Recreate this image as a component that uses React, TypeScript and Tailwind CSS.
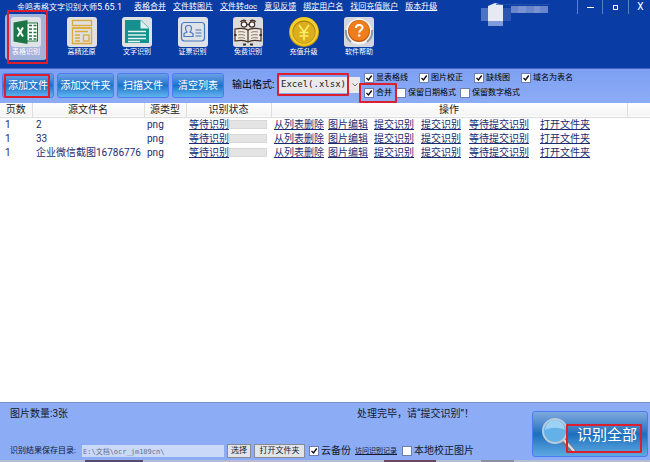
import React from 'react';

const menuLinks = ['表格合并', '文件转图片', '文件转doc', '意见反馈', '绑定用户名', '找回充值账户', '版本升级'];

const files = [
  { pages: 1, name: '2', type: 'png' },
  { pages: 1, name: '33', type: 'png' },
  { pages: 1, name: '企业微信截图16786776', type: 'png' },
];

const rowActions = ['从列表删除', '图片编辑', '提交识别', '提交识别', '等待提交识别', '打开文件夹'];

const ExcelIcon = () => (
  <svg viewBox="0 0 30 30" className="h-[30px] w-[30px]">
    <rect width="30" height="30" rx="3" fill="#dfe3e6" />
    <rect x="15" y="6" width="11.500" height="18" fill="#fff" stroke="#1d7545" />
    <path d="M18 8.500h3M22.500 8.500h3M18 12h3M22.500 12h3M18 15.500h3M22.500 15.500h3M18 19h3M22.500 19h3M18 22h3M22.500 22h3" stroke="#1d7545" strokeWidth="1.700" />
    <path d="M2.500 5.500 16.500 3v24L2.500 24.500z" fill="#1d7545" />
    <path d="M6.500 10.500l5.500 9M12 10.500l-5.500 9" stroke="#fff" strokeWidth="2" />
  </svg>
);

const LayoutIcon = () => (
  <svg viewBox="0 0 30 30" className="h-[30px] w-[30px]" fill="none" stroke="#dcaa3c" strokeWidth="1.300">
    <rect width="30" height="30" rx="3" fill="#dfe0df" stroke="none" />
    <rect x="5.500" y="3.500" width="19" height="5" />
    <path d="M24.500 11v15.500h-19V11z" />
    <path d="M5.500 11h19M8 14.500h13M8 18h5M8 21h5M8 24h5" />
    <rect x="16.500" y="18" width="5.500" height="6" />
  </svg>
);

const TextIcon = () => (
  <svg viewBox="0 0 30 30" className="h-[30px] w-[30px]">
    <rect width="30" height="30" rx="3" fill="#dfe3e3" />
    <path d="M3 3h16l8 8v15H3z" fill="#14908f" />
    <path d="M18.500 3v8.500H27z" fill="#dff1f0" />
    <path d="M6 14.500h18M6 18h18M6 21.500h18M6 24.500h12" stroke="#e6f5f4" strokeWidth="1.300" />
  </svg>
);

const CardIcon = () => (
  <svg viewBox="0 0 30 30" className="h-[30px] w-[30px]" fill="none" stroke="#4878c0" strokeWidth="1.200">
    <rect width="30" height="30" rx="3" fill="#dfe2e6" stroke="none" />
    <rect x="3.500" y="5.500" width="23" height="18.500" rx="3" />
    <path d="M8 13.500C6.500 9 8.500 8.500 10.500 8.500s4 .5 2.500 5l-1 1.500 3 1.500v3H6v-3l3-1.500z" />
    <path d="M17.500 13h6M17.500 16h6M17.500 19h6" />
  </svg>
);

const BookIcon = () => (
  <svg viewBox="0 0 30 30" className="h-[30px] w-[30px]" fill="none" stroke="#443028" strokeWidth="1.200">
    <rect width="30" height="30" rx="3" fill="#dcdcdc" stroke="none" />
    <circle cx="11" cy="7.500" r="2.700" fill="#fff" />
    <circle cx="19" cy="7.500" r="2.700" fill="#fff" />
    <path d="M7.500 5c1-2 3.500-2 5.500-1M17 4c2-1 4.500-1 5.500 1M13.700 7.500h2.600" strokeWidth="1.500" />
    <path d="M2 12c5-1 10-1 13 1 3-2 8-2 13-1v12c-5-1-10-1-13 1-3-2-8-2-13-1z" fill="#f0e9df" />
    <path d="M15 13v12" />
    <path d="M5 15c3-.5 5-.5 7 .5M5 18c3-.5 5-.5 7 .5M5 21c3-.5 5-.5 7 .5M25 15c-3-.5-5-.5-7 .5M25 18c-3-.5-5-.5-7 .5M25 21c-3-.5-5-.5-7 .5" strokeWidth=".6" />
    <path d="M1 18h2.500M26.500 18h2.500M10 27.500h3M17 27.500h3" strokeWidth="2" />
  </svg>
);

const CoinIcon = () => (
  <svg viewBox="0 0 30 30" className="h-[30px] w-[30px]">
    <circle cx="15" cy="15" r="15" fill="#c79a10" />
    <circle cx="15" cy="14.500" r="14.200" fill="#f3cf2c" />
    <circle cx="15" cy="15" r="11.500" fill="#ac7d0d" />
    <circle cx="15" cy="15.500" r="10.800" fill="#dcae1d" />
    <path d="M10 8l5 7 5-7M15 15v8.500M10.500 15.500h9M10.500 19h9" stroke="#fff06a" strokeWidth="1.600" fill="none" />
  </svg>
);

const HelpIcon = () => (
  <svg viewBox="0 0 30 30" className="h-[30px] w-[30px]">
    <rect width="30" height="30" rx="3" fill="#d3d6da" />
    <circle cx="15" cy="14.500" r="13" fill="#f4f4f4" />
    <path d="M2 13a13 13 0 0 0 5 12M28 13a13 13 0 0 1-5 12" stroke="#8d949c" strokeWidth="2" fill="none" />
    <circle cx="15" cy="14" r="11" fill="#bd5510" />
    <circle cx="15" cy="13.500" r="10.300" fill="#ef7d1c" />
    <path d="M12 11c0-4 6.500-4 6.500-.5 0 2.500-3.300 2.500-3.300 5.300" stroke="#fff" strokeWidth="2" fill="none" />
    <circle cx="15.200" cy="18.500" r="1.300" fill="#fff" />
  </svg>
);

const MagnifierIcon = () => (
  <svg viewBox="0 0 36 36" className="h-9 w-9 shrink-0">
    <path d="M22 22l11 12" stroke="#6e7880" strokeWidth="5" />
    <path d="M22 21l11 12" stroke="#d8dcdf" strokeWidth="2.500" />
    <circle cx="14" cy="13" r="12" fill="#62b1e8" stroke="#b9cbd8" strokeWidth="2" />
    <path d="M4 12a10 10 0 0 1 20 0c-7-3-13-3-20 0z" fill="#9bd2f5" />
  </svg>
);

const tools = [
  { label: '表格识别', icon: ExcelIcon },
  { label: '高精还原', icon: LayoutIcon },
  { label: '文字识别', icon: TextIcon },
  { label: '证票识别', icon: CardIcon },
  { label: '免费识别', icon: BookIcon },
  { label: '充值升级', icon: CoinIcon },
  { label: '软件帮助', icon: HelpIcon },
];

const Highlight: React.FC<{ className: string }> = ({ className }) => (
  <span className={`pointer-events-none absolute z-10 rounded-[1px] border-2 border-[#dc1f2e] ${className}`} />
);

const CheckOption: React.FC<{ label: string; checked?: boolean; className?: string }> = ({ label, checked, className = 'text-[8px]' }) => (
  <label className={`relative flex items-center gap-[3px] whitespace-nowrap leading-[10px] ${className}`}>
    <input type="checkbox" defaultChecked={checked} className="peer h-2 w-2 shrink-0 appearance-none bg-white outline outline-[#6c7fae]" />
    <svg viewBox="0 0 8 8" className="pointer-events-none invisible absolute left-0 h-2 w-2 peer-checked:visible">
      <path d="M1.500 4l2 2 3.200-4.500" fill="none" stroke="#111" strokeWidth="1.400" />
    </svg>
    {label}
  </label>
);

const ToolbarButton: React.FC<{ label: string; className?: string; children?: React.ReactNode }> = ({ label, className = 'w-[52px]', children }) => (
  <button className={`relative h-[25px] rounded-[3px] border border-[#4a7bf0] bg-linear-to-b from-[#6aa0e4] via-[#1774cb] to-[#62b4ef] text-[10px] leading-3 whitespace-nowrap text-white ${className}`}>
    {label}
    {children}
  </button>
);

const Header = () => (
  <header className="h-[69px] border-b border-[#3f66c4] bg-[#0a3ca6] text-white">
    <div className="flex h-[14px] items-center pl-[17px]">
      <h1 className="w-[117px] text-[9px] leading-[14px] whitespace-nowrap">
        <span className="text-[8px]">金鸣表格文字识别大师</span>5.65.1
      </h1>
      <nav className="flex gap-[7px] text-[8px] leading-[14px] whitespace-nowrap">
        {menuLinks.map((link) => (
          <a key={link} href="#" className="underline">{link}</a>
        ))}
      </nav>
      <div className="ml-auto flex h-full items-start">
        <svg viewBox="0 0 70 24" className="mt-[3px] mr-[26px] h-6 w-[70px]">
          <path d="M0 5h8v13H0z" fill="#4d73c4" />
          <path d="M7 3l7-3 8 2v16H7z" fill="#e4e9f2" />
          <path d="M7 18h15v5H7z" fill="#7f9bd9" />
          <path d="M22 5h8v13h-8z" fill="#2a55b2" />
          <path d="M30 3h37v7H30z" fill="#6985cb" />
          <path d="M37 3h8v7h-8zM53 3h6v7h-6z" fill="#7892d2" />
          <path d="M15 1.500h54" stroke="#2f56b2" strokeWidth=".7" />
        </svg>
        <button aria-label="最小化" className="flex h-[14px] w-[25px] items-center justify-center border-l border-[#5c7fca]">
          <span className="h-px w-[7px] bg-white" />
        </button>
        <button aria-label="最大化" className="flex h-[14px] w-[26px] items-center justify-center border-l border-[#5c7fca]">
          <span className="h-[5px] w-[5px] border border-white" />
        </button>
        <button aria-label="关闭" className="h-[14px] w-[22px] border-l border-[#5c7fca] pl-[2px] text-[10px] leading-[14px]">X</button>
      </div>
    </div>
    <div className="ml-[5px] flex max-w-[375px] justify-between">
      {tools.map(({ label, icon: Icon }, i) => (
        <button key={label} className={`relative flex h-[46px] w-[42px] flex-col items-center rounded-sm pt-[3px] text-[7px] leading-[10px] whitespace-nowrap ${i === 0 ? 'bg-[#a3b2da]' : ''}`}>
          <Icon />
          <span>{label}</span>
          {i === 0 && <Highlight className="top-[-4px] left-[2px] h-[54px] w-[41px]" />}
        </button>
      ))}
    </div>
  </header>
);

const Toolbar = () => (
  <div className="flex h-[34px] items-start bg-linear-to-b from-[#7da0f2] to-[#8cacf5] pt-1 pl-[2px]">
    <div className="flex gap-[3px]">
      <ToolbarButton label="添加文件">
        <Highlight className="top-0 left-[1px] h-[24px] w-[46px]" />
      </ToolbarButton>
      <ToolbarButton label="添加文件夹" className="w-[57px]" />
      <ToolbarButton label="扫描文件" />
      <ToolbarButton label="清空列表" />
    </div>
    <label htmlFor="format" className="ml-[8px] w-[46px] text-[10px] leading-6 whitespace-nowrap">输出格式:</label>
    <div className="relative flex h-6 items-center">
      <select id="format" className="h-4 w-[82px] appearance-none bg-[#e9e9e9] pl-[3px] font-['DejaVu_Sans_Mono',monospace] text-[9px] text-[#222]">
        <option>Excel(.xlsx)</option>
      </select>
      <svg viewBox="0 0 6 4" className="pointer-events-none absolute top-[10px] right-[2px] h-1 w-[6px]">
        <path d="M.5.5 3 3 5.500.5" fill="none" stroke="#777" />
      </svg>
      <Highlight className="top-0 -left-px h-[23px] w-[72px]" />
    </div>
    <div className="ml-[5px] flex flex-col gap-[5px]">
      <div className="flex gap-[12px]">
        <CheckOption label="显表格线" checked />
        <CheckOption label="图片校正" checked />
        <CheckOption label="缺线图" checked />
        <CheckOption label="域名为表名" checked />
      </div>
      <div className="flex gap-[5px]">
        <div className="relative">
          <CheckOption label="合并" checked />
          <Highlight className="-top-[5px] -left-[6px] h-5 w-[38px]" />
        </div>
        <CheckOption label="保留日期格式" />
        <CheckOption label="保留数字格式" />
      </div>
    </div>
  </div>
);

const FileTable = () => (
  <table className="w-full table-fixed text-[10px] leading-[13px]">
    <colgroup>
      <col className="w-8" />
      <col className="w-28" />
      <col className="w-[42px]" />
      <col className="w-[85px]" />
      <col />
      <col className="w-[23px]" />
    </colgroup>
    <thead>
      <tr className="h-[14px] border-b border-[#dcdcdc] bg-linear-to-b from-white to-[#f4f4f4] text-[#222]">
        {['页数', '源文件名', '源类型', '识别状态', '操作', ''].map((title) => (
          <th key={title} className="border-r border-[#dedede] p-0 font-normal last:border-r-0">{title}</th>
        ))}
      </tr>
    </thead>
    <tbody className="text-[#1b2b70]">
      {files.map((file) => (
        <tr key={file.name} className="h-[14px]">
          <td className="p-0 pl-[5px]">{file.pages}</td>
          <td className="p-0 pl-1 whitespace-nowrap">{file.name}</td>
          <td className="p-0 pl-[3px]">{file.type}</td>
          <td className="p-0 pl-[3px]">
            <div className="flex items-center pr-1">
              <a href="#" className="w-10 underline">等待识别</a>
              <div className="h-[9px] flex-1 border border-[#d8d8d8] bg-[#e4e4e4]" />
            </div>
          </td>
          <td className="p-0 pl-[3px]">
            <div className="grid grid-cols-[54px_46px_47px_48px_71px_auto] whitespace-nowrap">
              {rowActions.map((action, i) => (
                <a key={i} href="#" className="underline">{action}</a>
              ))}
            </div>
          </td>
          <td className="p-0" />
        </tr>
      ))}
    </tbody>
  </table>
);

const Footer = () => (
  <footer className="border-t border-t-[#7b8fc4] bg-[#8cacf5] text-[#111a33]">
    <div className="flex h-[57px] justify-between">
      <div className="flex flex-1 flex-col justify-between pt-1 pb-[2px] pl-[10px]">
        <div className="flex text-[10px] leading-[14px] whitespace-nowrap">
          <p className="w-[347px]">图片数量:3张</p>
          <p>处理完毕，请“提交识别”！</p>
        </div>
        <div className="flex items-center whitespace-nowrap">
          <label htmlFor="folder" className="w-[72px] text-[8px] leading-[14px]">识别结果保存目录:</label>
          <input
            id="folder"
            defaultValue="E:\文档\ocr_jm189cn\"
            className="h-3 w-[142px] bg-[#cbd9f8] px-px font-['DejaVu_Sans_Mono','Noto_Sans_CJK_SC',monospace] text-[7px] text-[#63708f]"
          />
          <button className="ml-[3px] h-[14px] w-6 border border-[#858b98] bg-[#e3e4e6] text-[8px] leading-3">选择</button>
          <button className="ml-[3px] h-[14px] w-[51px] border border-[#858b98] bg-[#e3e4e6] text-[8px] leading-3">打开文件夹</button>
          <div className="ml-[5px] flex items-center gap-1">
            <CheckOption label="云备份" checked className="text-[10px]" />
            <a href="#" className="text-[7px] leading-3 underline">访问识别记录</a>
          </div>
          <div className="ml-[6px]">
            <CheckOption label="本地校正图片" className="text-[10px]" />
          </div>
        </div>
      </div>
      <button className="relative mt-2 mr-[2px] flex h-[46px] w-[116px] items-start rounded-[3px] border border-[#4a7bf0] bg-linear-to-b from-[#7fa9df] via-[#1b6fbd] to-[#5ea9e3] pt-[6px] pl-2 text-[15px] whitespace-nowrap text-white">
        <MagnifierIcon />
        <span className="pt-[7px] leading-5">识别全部</span>
        <Highlight className="top-3 left-[33px] h-[29px] w-[76px]" />
      </button>
    </div>
    <div className="flex h-[2px] bg-[#b5bcd6]">
      <div className="ml-[13%] w-[9%] bg-[#5b4a6c]" />
      <div className="ml-[37%] w-[8%] bg-[#6c4560]" />
      <div className="ml-[7%] w-[5%] bg-[#8d8ea3]" />
    </div>
  </footer>
);

const App: React.FC = () => {
  return (
    <div className="flex min-h-screen flex-col bg-white font-['Roboto','Noto_Sans_CJK_SC',sans-serif]">
      <Header />
      <Toolbar />
      <main className="flex-1">
        <FileTable />
      </main>
      <Footer />
    </div>
  );
};

export default App;
